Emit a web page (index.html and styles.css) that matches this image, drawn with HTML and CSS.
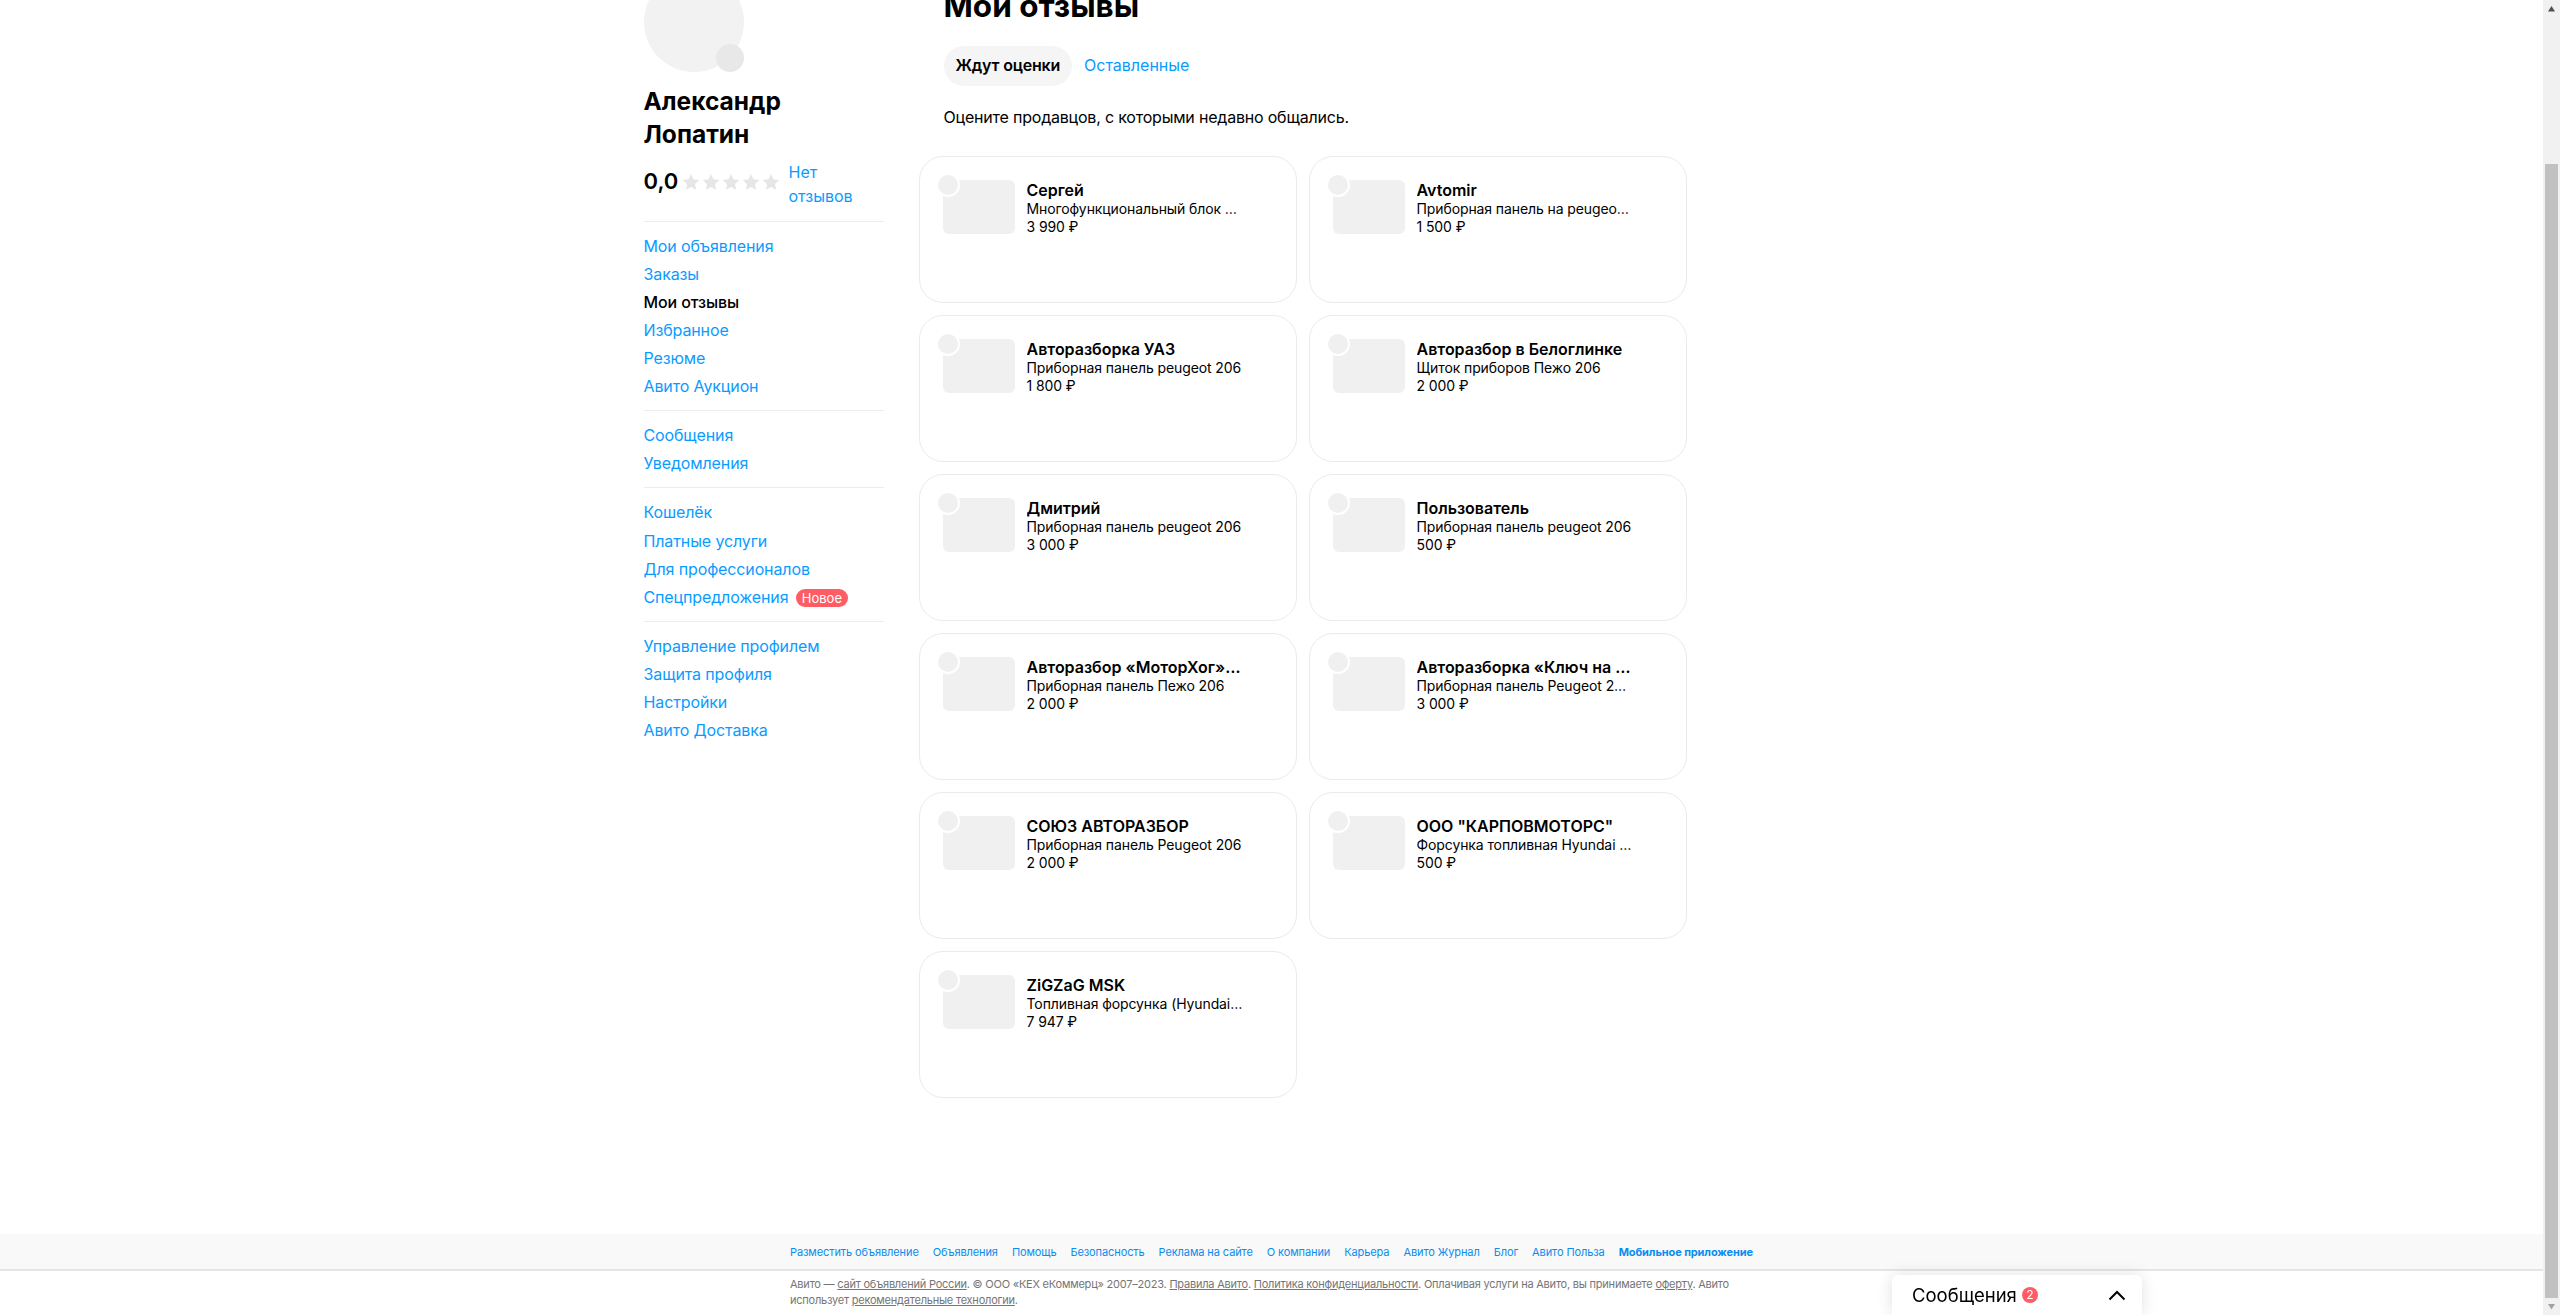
FILE: index.html
```html
<!DOCTYPE html>
<html lang="ru">
<head>
<meta charset="utf-8">
<title>Мои отзывы</title>
<link rel="stylesheet" href="styles.css">
</head>
<body>
<div class="app">
  <div class="layout">
    <aside class="sidebar">
      <div class="avatar"><span class="avatar-badge"></span></div>
      <h2 class="name">Александр Лопатин</h2>
      <div class="rating">
        <span class="score">0,0</span>
        <svg class="stars" width="100" height="20" viewBox="0 0 100 20">
          <path class="star" d="M10 2l2.500 5.300 5.800.7-4.300 4 1.100 5.800L10 15l-5.100 2.800L6 12 1.700 8l5.800-.7z"/>
          <path class="star" d="M30 2l2.500 5.300 5.800.7-4.300 4 1.100 5.800L30 15l-5.100 2.800L26 12l-4.300-4 5.800-.7z"/>
          <path class="star" d="M50 2l2.500 5.300 5.800.7-4.300 4 1.100 5.800L50 15l-5.100 2.800L46 12l-4.300-4 5.800-.7z"/>
          <path class="star" d="M70 2l2.500 5.300 5.800.7-4.300 4 1.100 5.800L70 15l-5.100 2.800L66 12l-4.300-4 5.800-.7z"/>
          <path class="star" d="M90 2l2.500 5.300 5.800.7-4.300 4 1.100 5.800L90 15l-5.100 2.800L86 12l-4.300-4 5.800-.7z"/>
        </svg>
        <a class="reviews-link">Нет отзывов</a>
      </div>
      <nav class="menu">
        <ul class="menu-group">
          <li class="menu-item">Мои объявления</li>
          <li class="menu-item">Заказы</li>
          <li class="menu-item menu-item-active">Мои отзывы</li>
          <li class="menu-item">Избранное</li>
          <li class="menu-item">Резюме</li>
          <li class="menu-item">Авито Аукцион</li>
        </ul>
        <ul class="menu-group">
          <li class="menu-item">Сообщения</li>
          <li class="menu-item">Уведомления</li>
        </ul>
        <ul class="menu-group">
          <li class="menu-item menu-item-tall">Кошелёк</li>
          <li class="menu-item">Платные услуги</li>
          <li class="menu-item">Для профессионалов</li>
          <li class="menu-item">Спецпредложения <span class="new-badge">Новое</span></li>
        </ul>
        <ul class="menu-group menu-group-last">
          <li class="menu-item">Управление профилем</li>
          <li class="menu-item">Защита профиля</li>
          <li class="menu-item">Настройки</li>
          <li class="menu-item">Авито Доставка</li>
        </ul>
      </nav>
    </aside>
    <main class="content">
      <h1 class="title">Мои отзывы</h1>
      <div class="tabs">
        <span class="tab tab-active">Ждут оценки</span>
        <span class="tab">Оставленные</span>
      </div>
      <p class="lead">Оцените продавцов, с которыми недавно общались.</p>
      <div class="cards">
        <article class="card"><div class="thumb"><span class="thumb-dot"></span></div><div class="info"><div class="seller">Сергей</div><div class="item">Многофункциональный блок приборов</div><div class="price">3 990 ₽</div></div></article>
        <article class="card"><div class="thumb"><span class="thumb-dot"></span></div><div class="info"><div class="seller">Avtomir</div><div class="item">Приборная панель на peugeot 206 рестайлинг</div><div class="price">1 500 ₽</div></div></article>
        <article class="card"><div class="thumb"><span class="thumb-dot"></span></div><div class="info"><div class="seller">Авторазборка УАЗ</div><div class="item">Приборная панель peugeot 206</div><div class="price">1 800 ₽</div></div></article>
        <article class="card"><div class="thumb"><span class="thumb-dot"></span></div><div class="info"><div class="seller">Авторазбор в Белоглинке</div><div class="item">Щиток приборов Пежо 206</div><div class="price">2 000 ₽</div></div></article>
        <article class="card"><div class="thumb"><span class="thumb-dot"></span></div><div class="info"><div class="seller">Дмитрий</div><div class="item">Приборная панель peugeot 206</div><div class="price">3 000 ₽</div></div></article>
        <article class="card"><div class="thumb"><span class="thumb-dot"></span></div><div class="info"><div class="seller">Пользователь</div><div class="item">Приборная панель peugeot 206</div><div class="price">500 ₽</div></div></article>
        <article class="card"><div class="thumb"><span class="thumb-dot"></span></div><div class="info"><div class="seller">Авторазбор «МоторХог» Москва</div><div class="item">Приборная панель Пежо 206</div><div class="price">2 000 ₽</div></div></article>
        <article class="card"><div class="thumb"><span class="thumb-dot"></span></div><div class="info"><div class="seller">Авторазборка «Ключ на 13»</div><div class="item">Приборная панель Peugeot 206 1.4</div><div class="price">3 000 ₽</div></div></article>
        <article class="card"><div class="thumb"><span class="thumb-dot"></span></div><div class="info"><div class="seller">СОЮЗ АВТОРАЗБОР</div><div class="item">Приборная панель Peugeot 206</div><div class="price">2 000 ₽</div></div></article>
        <article class="card"><div class="thumb"><span class="thumb-dot"></span></div><div class="info"><div class="seller">ООО "КАРПОВМОТОРС"</div><div class="item">Форсунка топливная Hyundai Elantra</div><div class="price">500 ₽</div></div></article>
        <article class="card"><div class="thumb"><span class="thumb-dot"></span></div><div class="info"><div class="seller">ZiGZaG MSK</div><div class="item">Топливная форсунка (Hyundai Elantra)</div><div class="price">7 947 ₽</div></div></article>
      </div>
    </main>
  </div>
  <footer class="footer">
    <div class="footer-bar">
      <div class="footer-links">
        <a class="footer-link">Разместить объявление</a>
        <a class="footer-link">Объявления</a>
        <a class="footer-link">Помощь</a>
        <a class="footer-link">Безопасность</a>
        <a class="footer-link">Реклама на сайте</a>
        <a class="footer-link">О компании</a>
        <a class="footer-link">Карьера</a>
        <a class="footer-link">Авито Журнал</a>
        <a class="footer-link">Блог</a>
        <a class="footer-link">Авито Польза</a>
        <a class="footer-link footer-link-strong">Мобильное приложение</a>
      </div>
    </div>
    <p class="legal">Авито — <u>сайт объявлений России</u>. © ООО «КЕХ еКоммерц» 2007–2023. <u>Правила Авито</u>. <u>Политика конфиденциальности</u>. Оплачивая услуги на Авито, вы принимаете <u>оферту</u>. Авито использует <u>рекомендательные технологии</u>.</p>
  </footer>
</div>
<div class="messenger">
  <span class="messenger-title">Сообщения</span>
  <span class="messenger-count">2</span>
  <svg class="messenger-chevron" width="18" height="11" viewBox="0 0 18 11"><path d="M1.500 9.500L9 2l7.500 7.500"/></svg>
</div>
<div class="scrollbar">
  <svg class="scroll-arrow" width="17" height="17" viewBox="0 0 17 17"><path class="arrow-up" d="M5 11.500L8.500 6l3.500 5.500z"/></svg>
  <div class="scroll-track"><div class="scroll-thumb"></div></div>
  <svg class="scroll-arrow" width="17" height="17" viewBox="0 0 17 17"><path class="arrow-down" d="M5 6l3.500 5.500L12 6z"/></svg>
</div>
</body>
</html>
```

FILE: styles.css
```css
* { box-sizing: border-box; }
html, body { margin: 0; height: 100%; overflow: hidden; background: #fff; }
body { font-family: Inter, "Noto Sans", "Liberation Sans", sans-serif; color: #000; }
h1, h2, p, ul { margin: 0; padding: 0; }
ul { list-style: none; }

.app { width: 2543px; height: 1315px; display: flex; flex-direction: column; overflow: hidden; }
.layout { flex: 1; width: 1256px; margin: -28px auto 0; display: flex; min-height: 0; }

.sidebar { width: 240px; flex: none; margin-right: 60px; }
.avatar { width: 100px; height: 100px; border-radius: 50%; background: #f2f2f2; position: relative; }
.avatar-badge { position: absolute; right: 0; bottom: 0; width: 28px; height: 28px; border-radius: 50%; background: #e8e8e8; }
.name { margin-top: 13px; font-size: 24.5px; line-height: 33px; font-weight: 700; width: 170px; }
.rating { display: flex; align-items: center; margin-top: 9px; padding-bottom: 13px; border-bottom: 1px solid #ececec; }
.score { font-size: 22px; font-weight: 600; line-height: 24px; width: 37px; flex: none; margin-bottom: 6px; }
.stars { flex: none; margin-right: 8px; margin-bottom: 4px; }
.star { fill: #e6e6e6; }
.reviews-link { width: 80px; font-size: 16px; line-height: 24px; color: #0a9bff; }

.menu-group { padding: 10px 0; border-bottom: 1px solid #ececec; }
.menu-group-last { border-bottom: 0; }
.menu-item { font-size: 16px; line-height: 28px; color: #0a9bff; white-space: nowrap; letter-spacing: -0.12px; }
.menu-item-tall { margin-bottom: 1px; }
.menu-item-active { color: #000; font-weight: 500; }
.new-badge { display: inline-block; margin-left: 3px; padding: 0 6px; height: 18px; border-radius: 9px; background: #ff5c64; color: #fff; font-size: 13px; line-height: 18px; letter-spacing: 0; }

.content { flex: 1; min-width: 0; }
.title { height: 54px; padding-top: 15px; font-size: 31.5px; line-height: 38px; font-weight: 700; }
.tabs { display: flex; align-items: center; margin-top: 20px; }
.tab { height: 40px; padding: 0 12px; font-size: 16px; line-height: 39px; color: #0a9bff; }
.tab-active { background: #f5f5f5; color: #000; font-weight: 600; border-radius: 20px; letter-spacing: -0.2px; }
.lead { margin-top: 19px; font-size: 16px; line-height: 24px; letter-spacing: -0.2px; }
.cards { margin: 27px 0 0 -25px; width: 768px; display: grid; grid-template-columns: 378px 378px; gap: 12px 12px; }
.card { height: 147px; border: 1px solid #ebebeb; border-radius: 24px; padding: 23px; display: flex; gap: 12px; }
.thumb { width: 72px; height: 54px; flex: none; background: #f0f0f0; border-radius: 6px; position: relative; }
.thumb-dot { position: absolute; left: -7px; top: -7px; width: 24px; height: 24px; border-radius: 50%; background: #f0f0f0; border: 2px solid #fff; }
.info { width: 216px; min-width: 0; font-size: 14px; line-height: 18px; letter-spacing: -0.1px; }
.seller { font-size: 16px; line-height: 20px; font-weight: 600; letter-spacing: 0; white-space: nowrap; overflow: hidden; text-overflow: ellipsis; }
.item { white-space: nowrap; overflow: hidden; text-overflow: ellipsis; }

.footer { flex: none; }
.footer-bar { height: 37px; background: #f9f9f9; border-bottom: 2px solid #e5e5e5; }
.footer-links { width: 963px; height: 35px; margin: 0 auto; display: flex; align-items: center; justify-content: space-between; }
.footer-link { font-size: 11px; letter-spacing: -0.1px; color: #0a8cf0; white-space: nowrap; }
.footer-link-strong { font-weight: 700; }
.legal { width: 963px; height: 39px; margin: 5px auto 0; font-size: 11px; letter-spacing: -0.22px; line-height: 16px; color: #757575; }

.messenger { position: fixed; left: 1892px; top: 1275px; width: 250px; height: 40px; padding-left: 20px; background: #fff; border-radius: 6px 6px 0 0; box-shadow: 0 0 16px rgba(0,0,0,.12); display: flex; align-items: center; }
.messenger-title { font-size: 18.5px; line-height: 40px; }
.messenger-count { margin-left: 5px; width: 16px; height: 16px; border-radius: 50%; background: #ff5c64; color: #fff; font-size: 12px; line-height: 16px; text-align: center; }
.messenger-chevron { position: absolute; left: 216px; top: 15px; fill: none; stroke: #000; stroke-width: 2; }

.scrollbar { position: fixed; right: 0; top: 0; width: 17px; height: 1315px; background: #f1f1f1; display: flex; flex-direction: column; }
.scroll-arrow { flex: none; }
.arrow-up { fill: #505050; }
.arrow-down { fill: #a3a3a3; }
.scroll-track { flex: 1; padding: 147px 2px 0; }
.scroll-thumb { height: 1134px; background: #c1c1c1; }
```
